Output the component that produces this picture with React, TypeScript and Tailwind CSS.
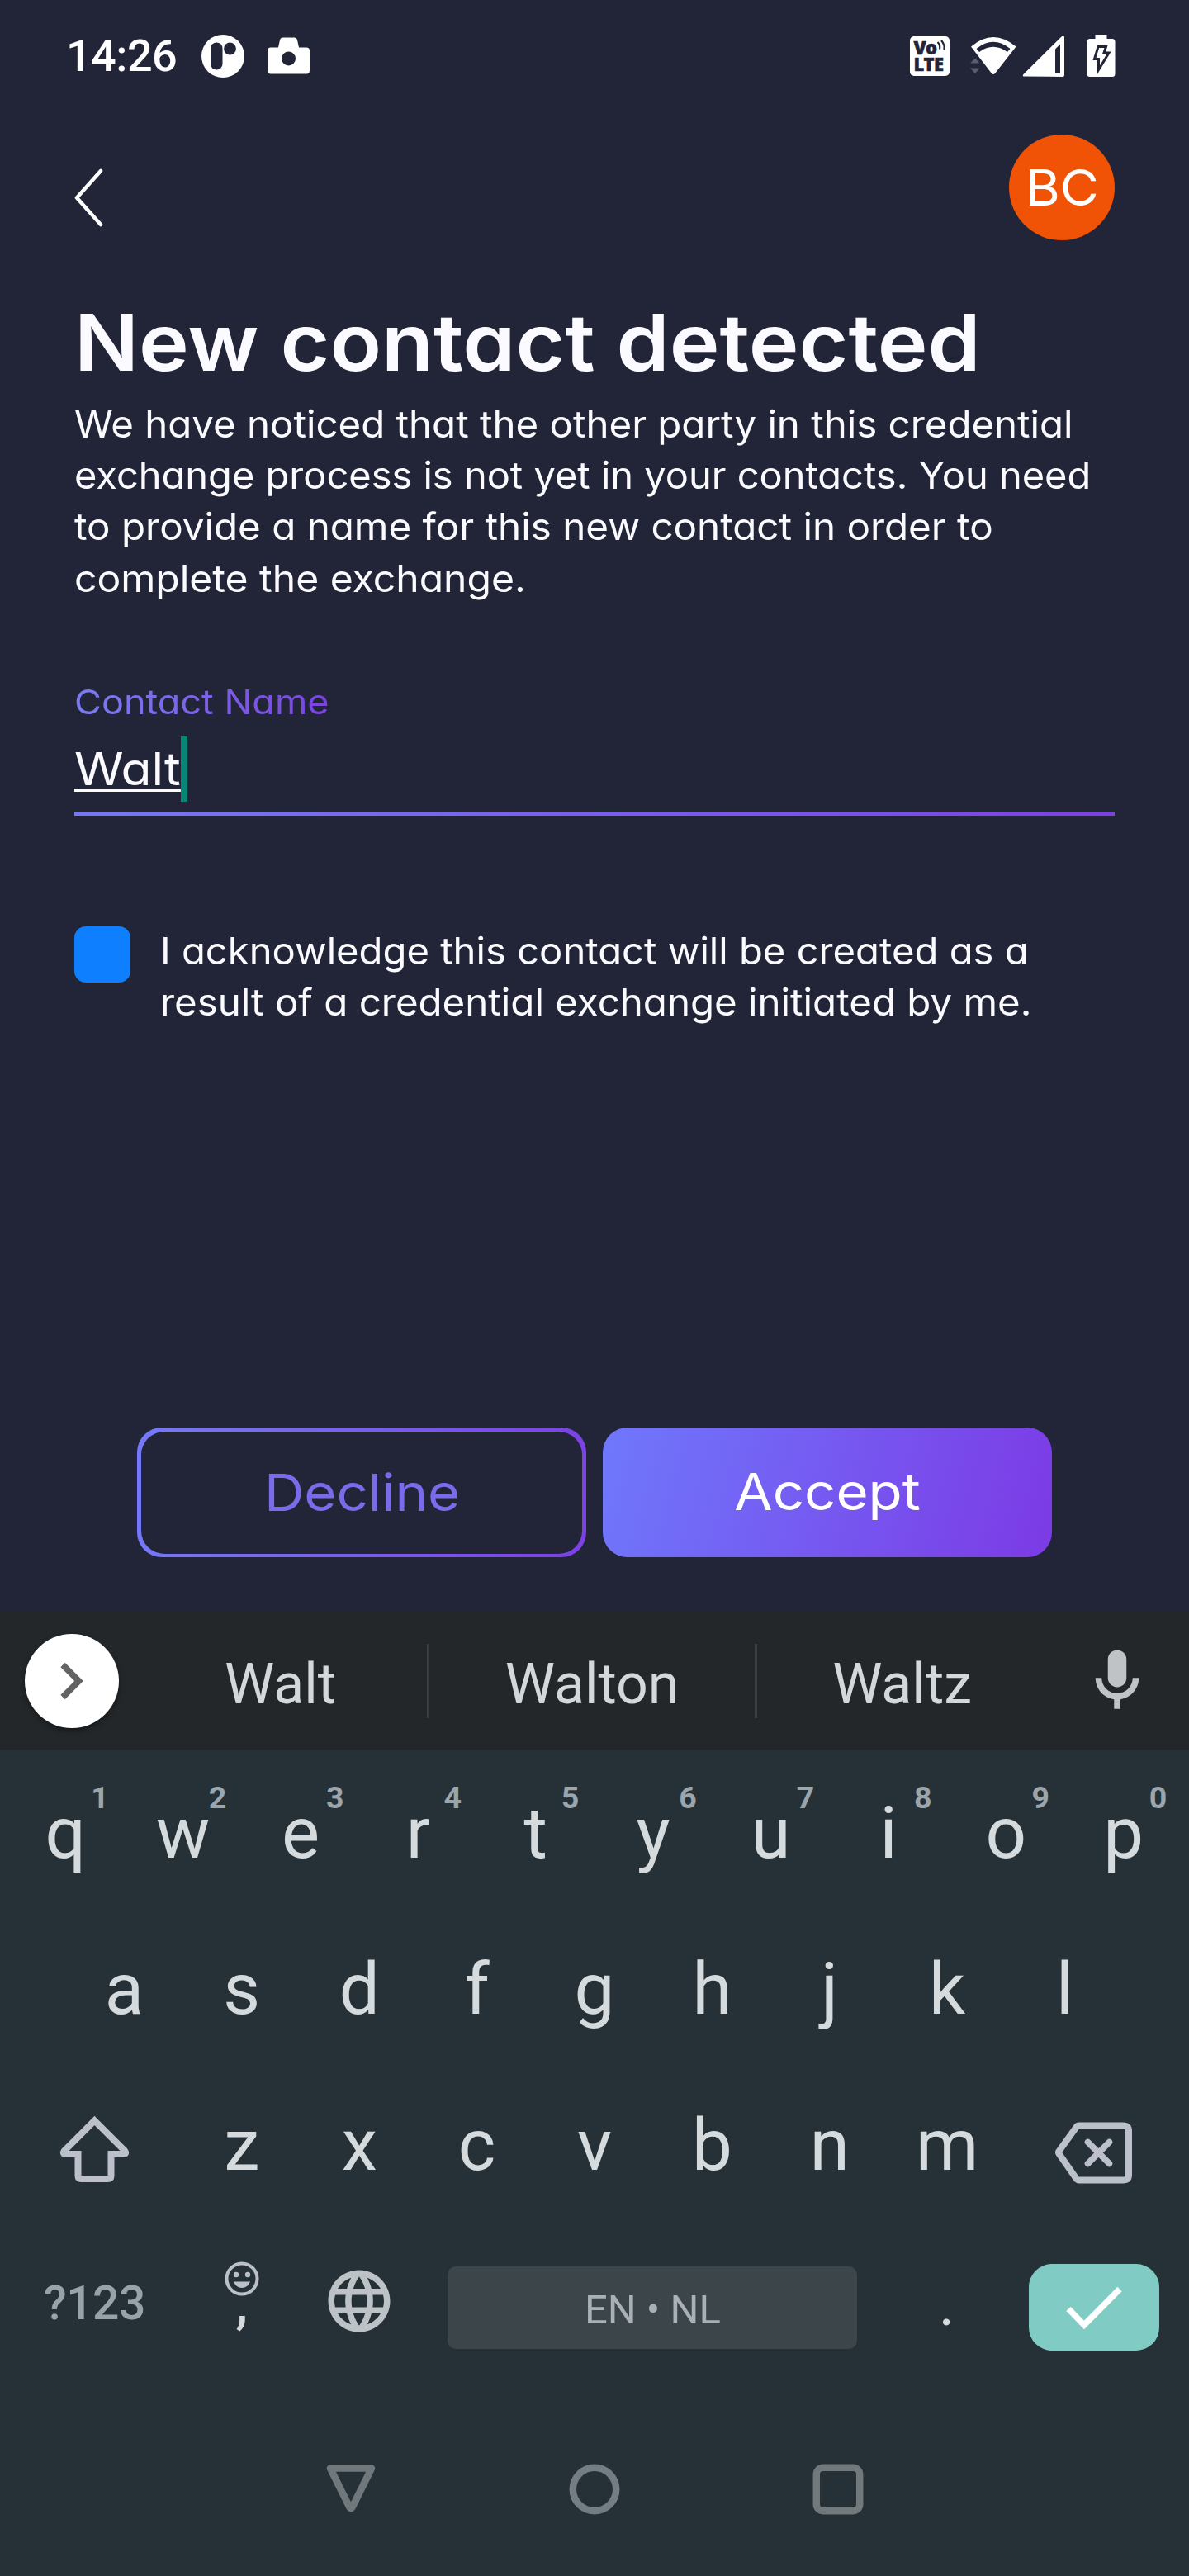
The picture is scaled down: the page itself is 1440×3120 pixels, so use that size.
import type { ReactNode } from "react";

const BODY_LINES = [
  { text: "We have noticed that the other party in this credential", stretch: "scale-x-[1.0536]" },
  { text: "exchange process is not yet in your contacts. You need", stretch: "scale-x-[1.0443]" },
  { text: "to provide a name for this new contact in order to", stretch: "scale-x-[1.0564]" },
  { text: "complete the exchange.", stretch: "scale-x-[1.0674]" },
];

const TOP_ROW = [
  ["q", "1"], ["w", "2"], ["e", "3"], ["r", "4"], ["t", "5"],
  ["y", "6"], ["u", "7"], ["i", "8"], ["o", "9"], ["p", "0"],
];
const HOME_ROW = ["a", "s", "d", "f", "g", "h", "j", "k", "l"];
const BOTTOM_ROW = ["z", "x", "c", "v", "b", "n", "m"];

function StatusBar() {
  return (
    <div className="flex h-[136px] items-center pl-[80px] pr-[89px] text-white">
      <span className="w-[137px] whitespace-nowrap font-['Roboto'] text-[54px] font-medium leading-[80px] tracking-[-0.58px]">
        14:26
      </span>
      <svg className="ml-[27px]" width="52" height="52" viewBox="0 0 52 52">
        <circle cx="26" cy="26" r="26" fill="#fff" />
        <rect x="11" y="9.5" width="14.5" height="33" rx="7.2" fill="#212537" />
        <circle cx="34.5" cy="17" r="7.4" fill="#212537" />
      </svg>
      <svg className="ml-[27px]" width="53" height="46" viewBox="0 0 53 46">
        <path
          d="M5 12.500H14L16 3.500Q16.700 0.500 19.500 0.500H33.500Q36.300 0.500 37 3.500L39 12.500H48Q52 12.500 52 16.500V40.500Q52 44.500 48 44.500H5Q1 44.500 1 40.500V16.500Q1 12.500 5 12.500Z"
          fill="#fff"
        />
        <circle cx="26.500" cy="26" r="8.500" fill="#212537" />
      </svg>

      <div className="ml-auto flex items-center">
        <div className="relative size-[48px] rounded-[5px] bg-white pl-[4.500px] pt-[2.500px] font-['Open_Sans'] text-[22px] font-extrabold leading-[20.500px] text-[#212537]">
          <span className="tracking-[-0.7px] [-webkit-text-stroke:0.5px_#212537]">
            Vo
            <br />
            LTE
          </span>
          <svg className="absolute left-[32px] top-[4px]" width="12" height="15" viewBox="0 0 12 15" fill="none" stroke="#212537" strokeWidth="2.200">
            <path d="M1.500 3Q5 6.500 4 11.500M6 1Q10.500 6 9.500 12.500" />
          </svg>
        </div>
        <svg className="ml-[24px]" width="58" height="50" viewBox="0 0 58 50">
          <path d="M2 13.500Q29 -9.500 56.500 13.500L31 46Q29 48 27 46Z" fill="#fff" />
          <path d="M8.500 16Q29 -0.500 49.500 16L46 20Q29 7.500 12 20Z" fill="#212537" />
          <path d="M1 33.500L7 27.500L12.500 33.500ZM1 39.500H12.500L7 46Z" fill="#5b5d6f" />
        </svg>
        <svg className="ml-[6px]" width="52" height="52" viewBox="0 0 52 52">
          <path d="M1.500 50.500Q0 50 1.500 48L48 2Q51 0 51 3.500V49Q51 51 49 51Z" fill="#fff" />
          <path d="M40 17.500L46 11.500V46.500H40Z" fill="#212537" />
        </svg>
        <svg className="ml-[26px]" width="35" height="54" viewBox="0 0 35 54">
          <path d="M10.500 1H24.500V6H31Q34.500 6 34.500 9.500V48.500Q34.500 52 31 52H4Q0.500 52 0.500 48.500V9.500Q0.500 6 4 6H10.500Z" fill="#fff" />
          <path d="M14 15.500H23.500L21 23H27L14.500 43.500V30.500H9.500Z" fill="none" stroke="#212537" strokeWidth="3" />
        </svg>
      </div>
    </div>
  );
}

function ContactForm() {
  return (
    <main className="h-[1816px] px-[90px] font-['Inter','Liberation_Sans',sans-serif] text-[#fbfbff] [font-feature-settings:'cv11']">
      <header className="flex h-[229px] items-start justify-between">
        <svg className="mt-[66px]" width="38" height="74" viewBox="0 0 38 74" fill="none" stroke="#fff" strokeWidth="4.500" strokeLinecap="round" strokeLinejoin="round">
          <path d="M32 5L3 37.500L32 70" />
        </svg>
        <div className="mt-[27px] flex size-[128px] items-center justify-center rounded-full bg-[#f15306] text-[61px] leading-none text-white">
          <span className="scale-x-[1.055]">BC</span>
        </div>
      </header>

      <h1 className="origin-left scale-x-[1.0824] whitespace-nowrap text-[95px] font-semibold leading-[100px]">New contact detected</h1>
      <div className="mt-[18px] text-[45px] leading-[62.2px]">
        {BODY_LINES.map((line) => (
          <p key={line.text} className={`origin-left whitespace-nowrap ${line.stretch}`}>
            {line.text}
          </p>
        ))}
      </div>

      <div className="mt-[88px] w-fit origin-left scale-x-[1.098] bg-linear-to-r from-[#7b7cf0] to-[#7a42e0] bg-clip-text text-[41px] leading-[60px] text-transparent">
        Contact Name
      </div>
      <div className="mt-[12px] flex h-[79px] items-center">
        <div className="w-[129px]">
          <span className="inline-block origin-left scale-x-[1.1] whitespace-nowrap text-[55px] leading-[79px] underline decoration-[3px] underline-offset-[5px]">
            Walt
          </span>
        </div>
        <span className="h-full w-[8px] bg-[#078676]" />
      </div>
      <div className="mt-[13px] h-[4px] bg-linear-to-r from-[#7577f4] to-[#7c40e4]" />

      <div className="mt-[133px] flex">
        <span className="mt-px size-[68px] rounded-[14px] bg-[#0e80ff]" />
        <div className="ml-[36px] whitespace-nowrap text-[45px] leading-[62px]">
          <p className="origin-left scale-x-[1.0486]">I acknowledge this contact will be created as a</p>
          <p className="origin-left scale-x-[1.0546]">result of a credential exchange initiated by me.</p>
        </div>
      </div>

      <div className="mt-[484px] flex justify-center gap-[20px] text-[62px] leading-[80px]">
        <button className="h-[157px] w-[544px] rounded-[30px] bg-linear-[100deg] from-[#757afa] to-[#7c40e4] px-[5px] pb-[4px] pt-[5px]">
          <span className="flex h-full items-center justify-center rounded-[28px] bg-[#212537] pl-[2px] text-[#7a6bea]">
            <span className="scale-x-[1.083]">Decline</span>
          </span>
        </button>
        <button className="flex h-[157px] w-[544px] items-center justify-center rounded-[30px] bg-linear-[105deg] from-[#6f78fc] to-[#7c3ae5] text-white">
          <span className="scale-x-[1.084]">Accept</span>
        </button>
      </div>
    </main>
  );
}

function SuggestionBar() {
  return (
    <div className="flex h-[167px] items-center bg-[#23272a] font-['Roboto'] text-[68px] leading-[80px] text-[#d3d8db]">
      <span className="ml-[30px] flex size-[114px] items-center justify-center rounded-full bg-white shadow-[0_3px_6px_rgba(0,0,0,0.4)]">
        <svg width="28" height="46" viewBox="0 0 28 46" fill="none" stroke="#636363" strokeWidth="7.500">
          <path d="M3 3.500L22.500 23L3 42.500" />
        </svg>
      </span>
      <div className="ml-[18px] flex flex-1 items-center">
        <span className="w-[355px] pt-[8px] text-center">Walt</span>
        <span className="h-[90px] w-[3px] bg-[#3a3e41]" />
        <span className="w-[394px] pt-[8px] text-center">Walton</span>
        <span className="h-[90px] w-[3px] bg-[#3a3e41]" />
        <span className="w-[351px] pt-[8px] text-center">Waltz</span>
      </div>
      <svg className="mr-[42px]" width="90" height="90" viewBox="0 0 24 24" fill="#bfc3c5">
        <path d="M12 14c1.660 0 3-1.340 3-3V5c0-1.660-1.340-3-3-3S9 3.340 9 5v6c0 1.660 1.340 3 3 3z" />
        <path d="M17 11c0 2.760-2.240 5-5 5s-5-2.240-5-5H5c0 3.530 2.610 6.430 6 6.920V21h2v-3.080c3.390-.490 6-3.390 6-6.920h-2z" />
      </svg>
    </div>
  );
}

function Key({ children }: { children: ReactNode }) {
  return <div className="w-[142.400px] text-center">{children}</div>;
}

function Keyboard() {
  return (
    <section className="h-[1001px] bg-[#263137] pt-[46px] font-['Roboto'] text-[87px] leading-[110px] text-[#d5dadd]">
      <div className="flex h-[189px] justify-center">
        {TOP_ROW.map(([letter, digit]) => (
          <div key={letter} className="relative w-[142.400px] text-center">
            {letter}
            <span className="absolute left-[99px] top-[-10px] w-[28px] text-center text-[37.500px] font-bold leading-[44px] text-[#9ba5ac]">
              {digit}
            </span>
          </div>
        ))}
      </div>
      <div className="flex h-[189px] justify-center">
        {HOME_ROW.map((letter) => (
          <Key key={letter}>{letter}</Key>
        ))}
      </div>
      <div className="flex h-[189px] justify-center">
        <div className="flex w-[213.600px] justify-center">
          <svg className="mt-[18px]" width="90" height="84" viewBox="0 0 90 84" fill="none" stroke="#bcc0ca" strokeWidth="8">
            <path d="M44.500 7.500L81 44Q84 48 79 48H64.500V74Q64.500 78 60.500 78H28.500Q24.500 78 24.500 74V48H10Q5 48 8 44Z" />
          </svg>
        </div>
        {BOTTOM_ROW.map((letter) => (
          <Key key={letter}>{letter}</Key>
        ))}
        <div className="flex w-[213.600px] justify-center">
          <svg className="mt-[26px]" width="98" height="78" viewBox="0 0 98 78" fill="none" stroke="#bcc0ca" strokeWidth="8" strokeLinejoin="round" strokeLinecap="round">
            <path d="M31 5.500H84Q91 5.500 91 12V65Q91 71.500 84 71.500H31Q28.500 71.500 27 69L6.500 39.500Q5.500 38 6.500 36.500L27 8Q28.500 5.500 31 5.500Z" />
            <path d="M41.500 25.500L67.500 51.500M67.500 25.500L41.500 51.500" strokeWidth="7.500" />
          </svg>
        </div>
      </div>
      <div className="flex h-[130px] items-start pl-[8px]">
        <div className="w-[213.600px] pl-[45px] pt-[28px] text-[57px] font-medium leading-[60px] tracking-[-0.5px] text-[#98a2a9]">
          ?123
        </div>
        <div className="flex w-[142.400px] flex-col items-center pt-[7px]">
          <svg width="42" height="42" viewBox="0 0 42 42">
            <circle cx="21" cy="21" r="18.500" fill="none" stroke="#bcc1c8" strokeWidth="4" />
            <circle cx="14" cy="16" r="3.200" fill="#bcc1c8" />
            <circle cx="28" cy="16" r="3.200" fill="#bcc1c8" />
            <path d="M11 24.500H31Q28 32 21 32Q14 32 11 24.500Z" fill="#bcc1c8" />
          </svg>
          <span className="mt-[-48px] text-[74px]">,</span>
        </div>
        <div className="flex w-[142.400px] justify-center pt-[10px]">
          <svg width="90" height="90" viewBox="0 0 24 24" fill="#bcc2c5">
            <path d="M11.990 2C6.470 2 2 6.480 2 12s4.470 10 9.990 10C17.520 22 22 17.520 22 12S17.520 2 11.990 2zm6.930 6h-2.950c-.320-1.250-.780-2.450-1.380-3.560 1.840.630 3.370 1.910 4.330 3.560zM12 4.040c.830 1.200 1.480 2.530 1.910 3.960h-3.820c.430-1.430 1.080-2.760 1.910-3.960zM4.260 14C4.100 13.360 4 12.690 4 12s.100-1.360.260-2h3.380c-.080.660-.140 1.320-.140 2 0 .680.060 1.340.140 2H4.260zm.820 2h2.950c.320 1.250.780 2.450 1.380 3.560-1.840-.630-3.370-1.900-4.330-3.560zm2.950-8H5.080c.960-1.660 2.490-2.930 4.330-3.560C8.810 5.550 8.350 6.750 8.030 8zM12 19.960c-.830-1.200-1.480-2.530-1.910-3.960h3.820c-.430 1.430-1.080 2.760-1.910 3.960zM14.340 14H9.660c-.090-.660-.160-1.320-.160-2 0-.680.070-1.350.160-2h4.680c.090.650.160 1.320.160 2 0 .680-.070 1.340-.160 2zm.250 5.560c.600-1.110 1.060-2.310 1.380-3.560h2.950c-.960 1.650-2.490 2.930-4.330 3.560zM16.360 14c.080-.660.140-1.320.140-2 0-.680-.060-1.340-.140-2h3.380c.160.640.260 1.310.260 2s-.100 1.360-.260 2h-3.380z" />
          </svg>
        </div>
        <div className="ml-[36px] mt-[13px] flex h-[100px] w-[496px] items-center justify-center rounded-[10px] bg-[#3b454a] text-[49px] leading-[60px] text-[#aab1b6]">
          <span className="pt-[5px]">EN • NL</span>
        </div>
        <div className="ml-[37px] mt-[4px] w-[142.400px] text-center text-[74px]">.</div>
        <div className="ml-[28px] mt-[10px] flex h-[105px] w-[158px] items-center justify-center rounded-[28px] bg-[#80cbc4]">
          <svg width="68" height="54" viewBox="0 0 68 54" fill="none" stroke="#fff" strokeWidth="7.500">
            <path d="M3 28.500L22 48L65 4.500" />
          </svg>
        </div>
      </div>
      <nav className="mt-[121px] flex items-start justify-center gap-[233px]">
        <svg width="62" height="64" viewBox="0 0 62 64" fill="none" stroke="#71787c" strokeWidth="8.500" strokeLinejoin="round">
          <path d="M6 6.500H56L32.500 54Q31 56 29.500 54Z" />
        </svg>
        <svg width="62" height="64" viewBox="0 0 62 64" fill="none" stroke="#747c84" strokeWidth="8.500">
          <circle cx="31" cy="32" r="26.200" />
        </svg>
        <svg width="62" height="64" viewBox="0 0 62 64" fill="none" stroke="#73787b" strokeWidth="8.500">
          <rect x="4.800" y="5.800" width="52.400" height="52.400" rx="8" />
        </svg>
      </nav>
    </section>
  );
}

export default function App() {
  return (
    <div className="h-[3120px] w-[1440px] overflow-hidden bg-[#212537]">
      <StatusBar />
      <ContactForm />
      <SuggestionBar />
      <Keyboard />
    </div>
  );
}
